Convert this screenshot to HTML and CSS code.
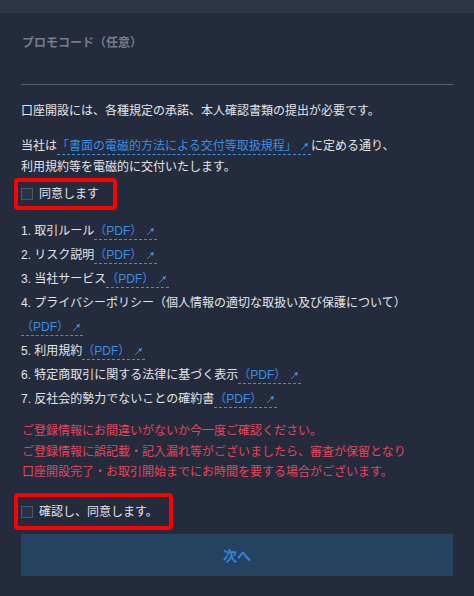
FILE: index.html
```html
<!DOCTYPE html>
<html lang="ja">
<head>
<meta charset="utf-8">
<title>口座開設</title>
<link rel="stylesheet" href="styles.css">
</head>
<body>
<div class="topbar"></div>
<main class="content">
  <div class="promo">
    <div class="promo-label">プロモコード（任意）</div>
    <div class="promo-input"></div>
  </div>
  <p class="intro">口座開設には、各種規定の承諾、本人確認書類の提出が必要です。</p>
  <p class="notice">当社は<a class="link" href="#">「書面の電磁的方法による交付等取扱規程」 <svg class="ext" viewBox="0 0 10 10" width="9" height="9"><path d="M1.2 8.8 L7.6 2.4" stroke="currentColor" stroke-width="1.1" fill="none"/><path d="M8.8 1.2 L4.4 2.2 L7.8 5.6 Z" fill="currentColor"/></svg></a>に定める通り、<br>利用規約等を電磁的に交付いたします。</p>
  <label class="agree agree-first"><span class="box"></span><span>同意します</span></label>
  <ol class="docs">
    <li>1. 取引ルール<a class="link" href="#">（PDF） <svg class="ext" viewBox="0 0 10 10" width="9" height="9"><path d="M1.2 8.8 L7.6 2.4" stroke="currentColor" stroke-width="1.1" fill="none"/><path d="M8.8 1.2 L4.4 2.2 L7.8 5.6 Z" fill="currentColor"/></svg></a></li>
    <li>2. リスク説明<a class="link" href="#">（PDF） <svg class="ext" viewBox="0 0 10 10" width="9" height="9"><path d="M1.2 8.8 L7.6 2.4" stroke="currentColor" stroke-width="1.1" fill="none"/><path d="M8.8 1.2 L4.4 2.2 L7.8 5.6 Z" fill="currentColor"/></svg></a></li>
    <li>3. 当社サービス<a class="link" href="#">（PDF） <svg class="ext" viewBox="0 0 10 10" width="9" height="9"><path d="M1.2 8.8 L7.6 2.4" stroke="currentColor" stroke-width="1.1" fill="none"/><path d="M8.8 1.2 L4.4 2.2 L7.8 5.6 Z" fill="currentColor"/></svg></a></li>
    <li>4. プライバシーポリシー（個人情報の適切な取扱い及び保護について）<br><a class="link" href="#">（PDF） <svg class="ext" viewBox="0 0 10 10" width="9" height="9"><path d="M1.2 8.8 L7.6 2.4" stroke="currentColor" stroke-width="1.1" fill="none"/><path d="M8.8 1.2 L4.4 2.2 L7.8 5.6 Z" fill="currentColor"/></svg></a></li>
    <li>5. 利用規約<a class="link" href="#">（PDF） <svg class="ext" viewBox="0 0 10 10" width="9" height="9"><path d="M1.2 8.8 L7.6 2.4" stroke="currentColor" stroke-width="1.1" fill="none"/><path d="M8.8 1.2 L4.4 2.2 L7.8 5.6 Z" fill="currentColor"/></svg></a></li>
    <li>6. 特定商取引に関する法律に基づく表示<a class="link" href="#">（PDF） <svg class="ext" viewBox="0 0 10 10" width="9" height="9"><path d="M1.2 8.8 L7.6 2.4" stroke="currentColor" stroke-width="1.1" fill="none"/><path d="M8.8 1.2 L4.4 2.2 L7.8 5.6 Z" fill="currentColor"/></svg></a></li>
    <li>7. 反社会的勢力でないことの確約書<a class="link" href="#">（PDF） <svg class="ext" viewBox="0 0 10 10" width="9" height="9"><path d="M1.2 8.8 L7.6 2.4" stroke="currentColor" stroke-width="1.1" fill="none"/><path d="M8.8 1.2 L4.4 2.2 L7.8 5.6 Z" fill="currentColor"/></svg></a></li>
  </ol>
  <p class="warning">ご登録情報にお間違いがないか今一度ご確認ください。<br>ご登録情報に誤記載・記入漏れ等がございましたら、審査が保留となり<br>口座開設完了・お取引開始までにお時間を要する場合がございます。</p>
  <label class="agree agree-second"><span class="box"></span><span>確認し、同意します。</span></label>
  <button class="next" type="button">次へ</button>
</main>
</body>
</html>
```
FILE: styles.css
```css
* { box-sizing: border-box; }
html, body { margin: 0; padding: 0; }
body {
  background: #232b3c;
  font-family: "Liberation Sans", "Noto Sans CJK JP", sans-serif;
  font-size: 12px;
  color: #e3e5e9;
  width: 474px;
  height: 596px;
  overflow: hidden;
}
.topbar {
  height: 13px;
  background: #2d3444;
}
.content {
  padding: 0 21px;
  display: flex;
  flex-direction: column;
  align-items: flex-start;
}
.promo {
  width: 100%;
  padding-top: 21px;
}
.promo-label {
  font-weight: bold;
  color: #767d8b;
  line-height: 18px;
  padding-left: 1px;
}
.promo-input {
  height: 33px;
  border-bottom: 1px solid #5a606d;
}
.intro {
  margin: 16px 0 0;
  line-height: 21px;
}
.notice {
  margin: 14px 0 0;
  line-height: 21px;
}
.link {
  color: #3a8ee4;
  text-decoration: none;
  border-bottom: 1px dashed #3a8ee4;
  padding-bottom: 1px;
}
.ext {
  vertical-align: -1px;
  margin-right: 2px;
}
.agree {
  display: flex;
  align-items: center;
  gap: 6px;
  margin-left: -7px;
  border: 4px solid #ff0000;
  border-radius: 4px;
  padding: 0 14px 0 3px;
  line-height: 18px;
}
.agree-first {
  height: 32px;
  margin-top: 0;
}
.agree-second {
  height: 37px;
  margin-top: 10px;
  padding-right: 11px;
  padding-top: 1px;
}
.box {
  width: 12px;
  height: 12px;
  border: 1px solid #4e5563;
  background: #2a3243;
  flex: none;
}
.docs {
  list-style: none;
  margin: 9px 0 0;
  padding: 0;
}
.docs li {
  line-height: 24px;
}
.warning {
  margin: 10px 0 0;
  color: #e8445a;
  line-height: 20.5px;
  padding-left: 1px;
}
.next {
  margin-top: 4px;
  width: 100%;
  height: 42px;
  border: none;
  background: #25425f;
  color: #2f86dc;
  font-family: inherit;
  font-size: 14px;
  font-weight: bold;
}
```
